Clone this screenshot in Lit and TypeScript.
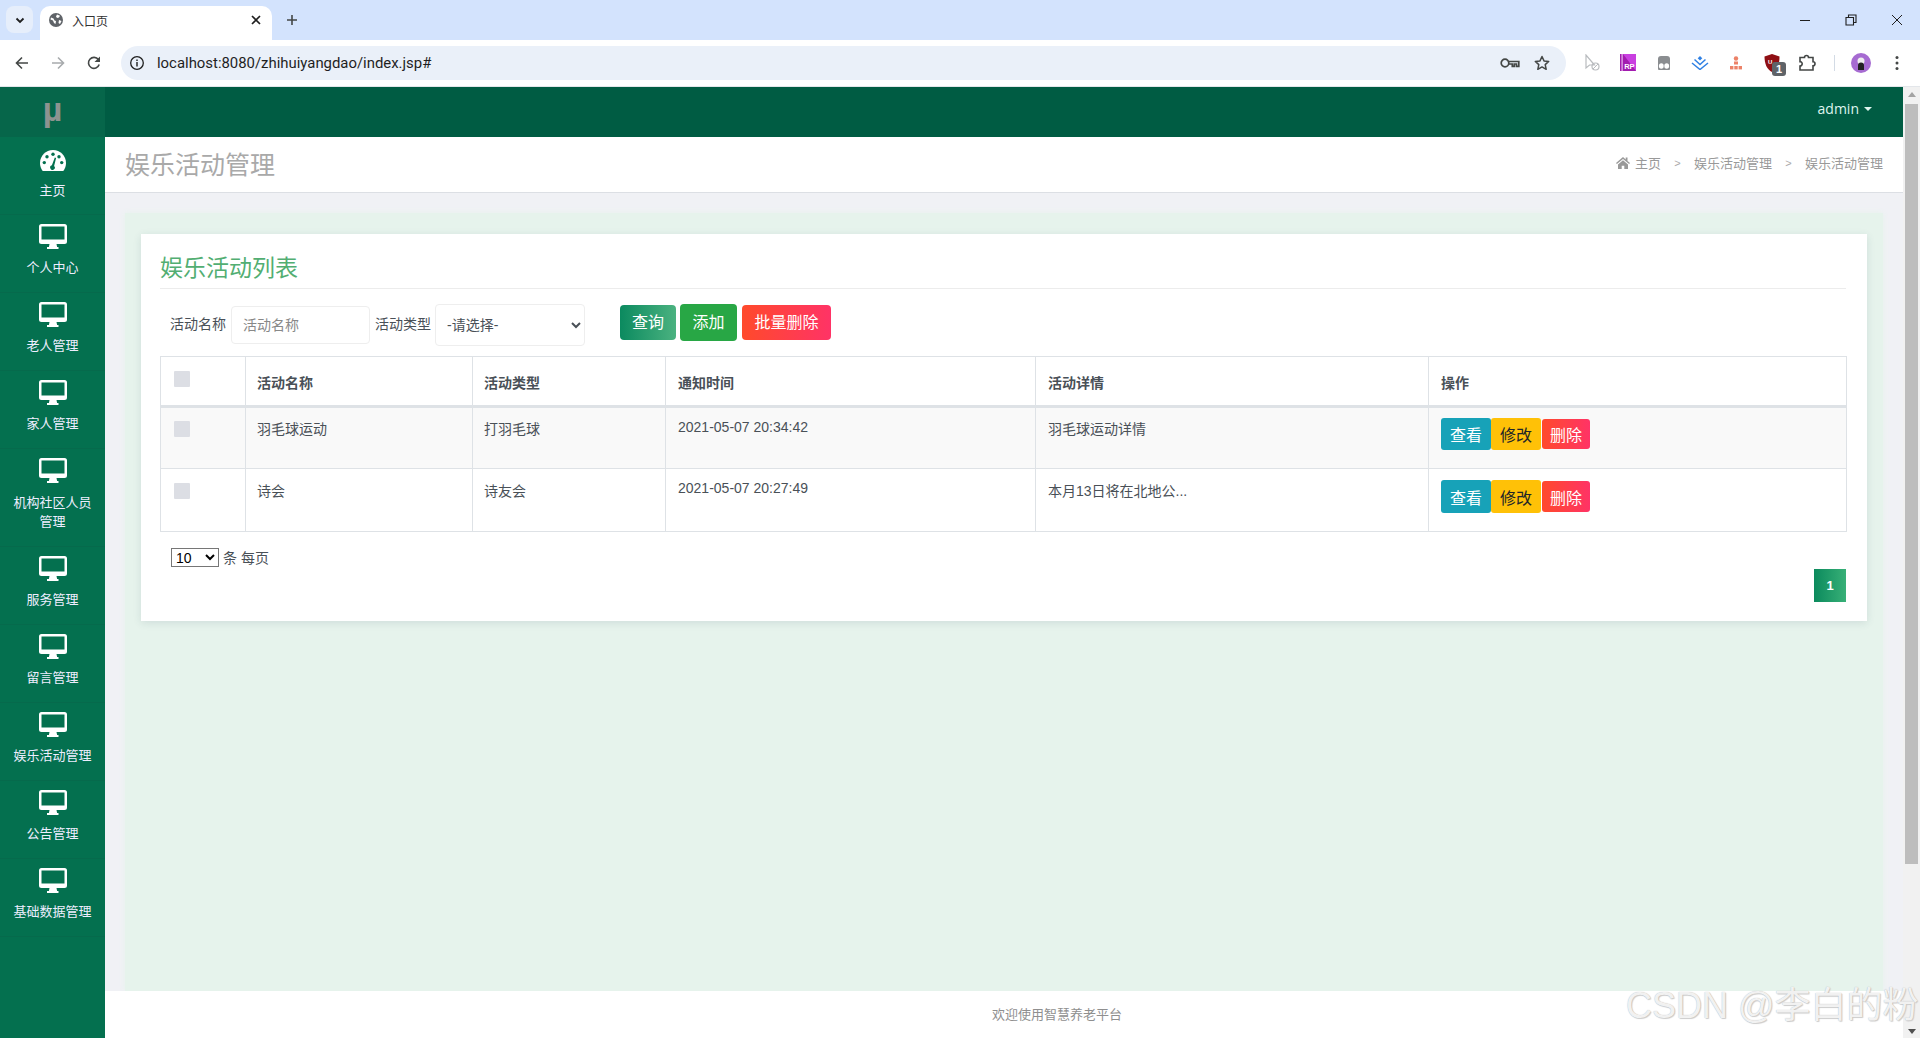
import { LitElement, html, css, svg } from 'lit';
import { customElement } from 'lit/decorators.js';

const desktop = html`<svg class="nav-svg" viewBox="0 0 28 25" width="28" height="25">
  <path fill="#fff" d="M2.5 0h23A2.5 2.5 0 0 1 28 2.5v15a2.5 2.5 0 0 1-2.5 2.5H2.5A2.5 2.5 0 0 1 0 17.5v-15A2.5 2.5 0 0 1 2.5 0zM2.5 2.5v13h23v-13z" fill-rule="evenodd"/>
  <path fill="#fff" d="M10.5 20h7l.6 3h1.4v2h-11.500v-2h1.900z"/>
</svg>`;

const gauge = html`<svg class="nav-svg" viewBox="0 0 26 21" width="26" height="21">
  <path fill="#fff" d="M13 0C5.800 0 0 5.800 0 13c0 2.900 1 5.700 2.700 8h20.600C25 18.700 26 15.900 26 13 26 5.800 20.200 0 13 0z"/>
  <g fill="#04704f">
    <circle cx="13" cy="4.200" r="1.700"/><circle cx="7" cy="6.800" r="1.700"/><circle cx="19" cy="6.800" r="1.700"/>
    <circle cx="4.300" cy="12.600" r="1.700"/><circle cx="21.700" cy="12.600" r="1.700"/>
    <path d="M14.800 7.500l1.300.4-2 8a2.300 2.300 0 1 1-2.200-.6z"/>
  </g>
</svg>`;

const homeIcon = svg`<path fill="#999" d="M7 1L0 7l.9 1L7 3l6.100 5 .9-1-2.500-2.100V1.500h-1.800v1.900zM2 8.500V13h3.700V9.700h2.600V13H12V8.500L7 4.300z"/>`;

const chromeIcon = {
  back: html`<svg viewBox="0 0 16 16" width="16" height="16"><path fill="none" stroke="#444746" stroke-width="1.600" d="M14 8H2.500M8 2.500L2.500 8 8 13.500"/></svg>`,
  forward: html`<svg viewBox="0 0 16 16" width="16" height="16"><path fill="none" stroke="#a8abad" stroke-width="1.600" d="M2 8h11.500M8 2.500L13.500 8 8 13.500"/></svg>`,
  reload: html`<svg viewBox="0 0 16 16" width="16" height="16"><path fill="none" stroke="#444746" stroke-width="1.600" d="M13.200 9.600A5.500 5.500 0 1 1 12.400 4.600"/><path fill="#444746" d="M14 1.500V7H8.500z"/></svg>`,
  info: html`<svg viewBox="0 0 16 16" width="16" height="16"><circle cx="8" cy="8" r="6.300" fill="none" stroke="#1f1f1f" stroke-width="1.300"/><path fill="#1f1f1f" d="M7.300 7h1.400v4.500H7.300zM7.300 4.500h1.400V6H7.300z"/></svg>`,
  key: html`<svg viewBox="0 0 20 12" width="20" height="12"><circle cx="5" cy="6" r="3.800" fill="none" stroke="#444746" stroke-width="1.700"/><path fill="none" stroke="#444746" stroke-width="1.700" d="M8.800 4.500h10v4.800h-2.300V7h-2.200v2.300h-2V7H8.800"/></svg>`,
  star: html`<svg viewBox="0 0 16 16" width="16" height="16"><path fill="none" stroke="#444746" stroke-width="1.500" stroke-linejoin="round" d="M8 1.500l2 4.400 4.700.5-3.500 3.200 1 4.700L8 11.900l-4.200 2.400 1-4.700-3.500-3.200 4.700-.5z"/></svg>`,
};

const extensions = [
  html`<svg viewBox="0 0 16 18" width="16" height="18"><path fill="none" stroke="#b9bcbf" stroke-width="1.200" d="M2 1v13l3.500-3h5z"/><circle cx="11.500" cy="12.500" r="3.500" fill="none" stroke="#b9bcbf" stroke-width="1.200"/><path stroke="#b9bcbf" d="M9 15l5-5"/></svg>`,
  html`<svg viewBox="0 0 16 17" width="16" height="17"><rect width="16" height="17" fill="#a21caf"/><path fill="#c93fe0" d="M3 0h13v17z"/><rect x="1.500" width="1.200" height="17" fill="#e9b7ef"/><text x="4.200" y="14.500" font-size="7.500" font-family="Liberation Sans" font-weight="700" fill="#fff">RP</text></svg>`,
  html`<svg viewBox="0 0 16 16" width="16" height="16"><path fill="#8a8d90" d="M2 4a3 3 0 0 1 3-3h6a3 3 0 0 1 3 3v10a1 1 0 0 1-1 1H3a1 1 0 0 1-1-1z"/><ellipse cx="5.300" cy="11" rx="2.400" ry="2.700" fill="#fff"/><ellipse cx="10.700" cy="11" rx="2.400" ry="2.700" fill="#fff"/></svg>`,
  html`<svg viewBox="0 0 18 14" width="18" height="14"><path fill="#2f80e4" d="M9 0l2.300 2.200L9 4.400 6.700 2.200z"/><path fill="none" stroke="#2f80e4" stroke-width="1.500" d="M3.500 3.500L9 8.500l5.500-5M1 7l8 6.500L17 7"/></svg>`,
  html`<svg viewBox="0 0 14 14" width="14" height="14"><g fill="#ec8268"><circle cx="7" cy="2.500" r="2.200"/><rect x="5" y="5.500" width="4" height="3"/><rect x="1" y="10" width="3.400" height="3.400"/><rect x="5.300" y="10" width="3.400" height="3.400"/><rect x="9.600" y="10" width="3.400" height="3.400"/></g></svg>`,
  html`<svg viewBox="0 0 16 18" width="16" height="18"><path fill="#8f0f14" d="M8 0l7.500 2.500C15.500 10 13 15.500 8 18 3 15.500.5 10 .5 2.500z"/><text x="4" y="10" font-size="6" font-family="Liberation Sans" font-weight="700" fill="#fff">U</text></svg>`,
  html`<svg viewBox="0 0 18 18" width="18" height="18"><path fill="none" stroke="#444746" stroke-width="1.600" d="M1 3.500h4.500a2 2 0 1 1 4 0H14v4.200a2 2 0 1 1 0 4V16H1v-4a2.200 2.200 0 1 0 0-4.400z"/></svg>`,
];

const nav = [
  { label: '主页', icon: gauge, kind: 'first' },
  { label: '个人中心' },
  { label: '老人管理' },
  { label: '家人管理' },
  { label: '机构社区人员管理', kind: 'two-line' },
  { label: '服务管理' },
  { label: '留言管理' },
  { label: '娱乐活动管理' },
  { label: '公告管理' },
  { label: '基础数据管理' },
];

const rows = [
  { name: '羽毛球运动', type: '打羽毛球', time: '2021-05-07 20:34:42', detail: '羽毛球运动详情', tall: false },
  { name: '诗会', type: '诗友会', time: '2021-05-07 20:27:49', detail: '本月13日将在北地公...', tall: true },
];

@customElement('app-root')
export class AppRoot extends LitElement {
  static styles = css`
    :host {
      display: block;
      position: relative;
      height: 1038px;
      overflow: hidden;
      font-family: "Liberation Sans", "Noto Sans CJK SC", sans-serif;
      font-size: 14px;
      color: #495057;
      background: #fff;
    }
    /* browser chrome */
    .tabstrip {
      height: 40px;
      background: #d3e3fd;
      display: flex;
      align-items: flex-end;
    }
    .tab-list {
      width: 27px;
      height: 27px;
      margin: 0 7px 7px 6px;
      border-radius: 8px;
      background: #e6eefb;
      display: flex;
      align-items: center;
      justify-content: center;
    }
    .tab {
      width: 232px;
      height: 34px;
      background: #fff;
      border-radius: 10px 10px 0 0;
      display: flex;
      align-items: center;
      padding: 0 9px 6px;
      box-sizing: border-box;
      font-size: 12px;
      color: #333;
    }
    .tab svg { margin-right: 9px; }
    .tab span { flex: 1; }
    .new-tab {
      width: 40px;
      height: 34px;
      box-sizing: border-box;
      padding-bottom: 6px;
      display: flex;
      align-items: center;
      justify-content: center;
    }
    .window-ctl {
      margin-left: auto;
      display: flex;
      height: 40px;
    }
    .window-ctl div {
      width: 46px;
      display: flex;
      align-items: center;
      justify-content: center;
    }
    .toolbar {
      height: 47px;
      background: #fff;
      display: flex;
      align-items: center;
      border-bottom: 1px solid #e3e6ea;
      box-sizing: border-box;
      padding-bottom: 1px;
    }
    .tool-btn {
      width: 36px;
      display: flex;
      justify-content: center;
    }
    .tool-btn.first { margin-left: 4px; }
    .omnibox {
      width: 1445px;
      height: 34px;
      margin-left: 9px;
      border-radius: 17px;
      background: #eaf0f9;
      display: flex;
      align-items: center;
      box-sizing: border-box;
      padding: 0 16px 0 8px;
      font-family: Roboto, sans-serif;
      font-size: 14.9px;
      color: #1f1f1f;
    }
    .omnibox .url { margin-left: 12px; flex: 1; }
    .omnibox .star { margin-left: 14px; display: flex; }
    .omnibox .key { display: flex; }
    .ext-row {
      display: flex;
      align-items: center;
      margin-left: 8px;
    }
    .ext {
      width: 36px;
      display: flex;
      justify-content: center;
      position: relative;
    }
    .ext .badge {
      position: absolute;
      left: 18px;
      top: 8px;
      width: 14px;
      height: 14px;
      border-radius: 3px;
      background: #5f6368;
      color: #fff;
      font-size: 11px;
      font-weight: 700;
      line-height: 14px;
      text-align: center;
    }
    .divider {
      width: 1px;
      height: 16px;
      margin: 0 8px;
      background: #d3dbe5;
    }
    .avatar {
      width: 20px;
      height: 20px;
      border-radius: 50%;
      background: #a66bd1;
      margin-left: 8px;
      display: flex;
      align-items: center;
      justify-content: center;
    }
    .menu-dots {
      margin-left: 24px;
      display: flex;
    }
    /* page */
    .page {
      display: flex;
      height: 951px;
    }
    .sidebar {
      width: 105px;
      flex: none;
      background: #04704f;
      color: #fff;
    }
    .logo {
      height: 50px;
      box-sizing: border-box;
      padding-bottom: 7px;
      background: #06664a;
      display: flex;
      align-items: center;
      justify-content: center;
      color: #8d9390;
      font-size: 34px;
      font-weight: 700;
      line-height: 1;
    }
    .nav-item {
      border-bottom: 1px solid #066a4c;
      padding: 9px 8px 15px;
      text-align: center;
      font-size: 13px;
      line-height: 18px;
      color: #eef;
    }
    .nav-item.first { padding-top: 13px; padding-bottom: 14px; }
    .nav-item.two-line { line-height: 19px; }
    .nav-icon {
      height: 25px;
      margin-bottom: 10px;
      display: flex;
      justify-content: center;
    }
    .nav-item.first .nav-icon { margin-bottom: 9px; height: 23px; }
    .main {
      flex: 1;
      min-width: 0;
      display: flex;
      flex-direction: column;
      background: #f0f1f5;
    }
    .topbar {
      height: 50px;
      flex: none;
      background: #005c43;
      display: flex;
      align-items: center;
      justify-content: flex-end;
      padding: 0 31px 7px 0;
      box-sizing: border-box;
      color: #dff5ee;
      font-family: "Open Sans", sans-serif;
      font-size: 14px;
    }
    .caret {
      width: 0;
      height: 0;
      margin-left: 5px;
      border: 4px solid transparent;
      border-top-color: #dff5ee;
      border-bottom: 0;
    }
    .page-head {
      height: 56px;
      flex: none;
      background: #fff;
      border-bottom: 1px solid #dcdfe4;
      box-sizing: border-box;
      display: flex;
      align-items: center;
      justify-content: space-between;
      padding: 0 20px 4px;
    }
    .page-head h1 {
      margin: 0;
      font-size: 25px;
      font-weight: 400;
      color: #a9a9a9;
    }
    .crumbs {
      display: flex;
      align-items: center;
      font-size: 13px;
      color: #999;
    }
    .crumbs svg { margin-right: 5px; }
    .crumbs i {
      font-style: normal;
      font-size: 11px;
      width: 33px;
      text-align: center;
      color: #aaa;
    }
    .panel {
      flex: 1;
      margin: 20px 20px 0;
      padding: 21px 16px 0;
      background: #e6f3ec;
      box-shadow: 0 0 6px #e6f3ec;
    }
    .card {
      background: #fff;
      padding: 14px 21px 19px 19px;
      box-shadow: 0 2px 8px rgba(40, 70, 90, .12);
    }
    .card h2 {
      margin: 0;
      height: 40px;
      line-height: 40px;
      border-bottom: 1px solid #ececec;
      font-size: 23px;
      font-weight: 400;
      color: #52ae72;
    }
    .filters {
      display: flex;
      align-items: center;
      height: 42px;
      margin-top: 15px;
    }
    .filters label {
      margin: 0 4px 5px 0;
      color: #495057;
    }
    .filters label:first-child { margin: 0 5px 4px 10px; }
    .filters input {
      width: 139px;
      height: 38px;
      margin: 0 5px 0 0;
      box-sizing: border-box;
      border: 1px solid #eee;
      border-radius: 4px;
      padding: 0 11px;
      font: inherit;
      color: #495057;
      outline: none;
    }
    .filters input::placeholder { color: #888; }
    .filters select {
      width: 150px;
      height: 42px;
      box-sizing: border-box;
      border: 1px solid #eee;
      border-radius: 4px;
      padding: 0 7px;
      background: #fff;
      font: inherit;
      color: #495057;
      margin-right: 35px;
    }
    .btn {
      border: 0;
      border-radius: 4px;
      padding: 0;
      font-family: inherit;
      font-size: 16px;
      color: #fff;
      text-align: center;
    }
    .filters .btn { height: 35px; margin: 0 4px 5px 0; padding-bottom: 3px; }
    .filters .btn.add { height: 37px; }
    .btn.search { width: 56px; background: linear-gradient(90deg, #0b8a5f, #4bb280); }
    .btn.add { width: 57px; background: #28a745; margin-right: 5px !important; }
    .btn.bulk { width: 89px; background: linear-gradient(90deg, #ff4a2b, #ff3366); }
    table {
      width: 1686px;
      margin-top: 10px;
      table-layout: fixed;
      border-collapse: collapse;
      border: 1px solid #dee2e6;
    }
    th, td {
      border: 1px solid #dee2e6;
      padding: 9px 12px 18px;
      text-align: left;
      vertical-align: top;
      line-height: 20px;
      font-weight: 400;
    }
    td.txt { padding-top: 11px; }
    th:nth-child(2), th:nth-child(3), td:nth-child(2), td:nth-child(3) { padding-left: 11px; }
    th {
      height: 50px;
      box-sizing: border-box;
      padding: 0 12px 12px;
      vertical-align: bottom;
      border-bottom: 3px solid #dee2e6;
      font-weight: 700;
      color: #495057;
    }
    th.check { vertical-align: top; padding: 14px 0 0 13px; }
    td.check { padding-left: 13px; padding-top: 13px; }
    td input, th input {
      appearance: none;
      display: block;
      width: 16px;
      height: 16px;
      margin: 0;
      background: #dcdee4;
      border-radius: 1px;
    }
    tr.odd td { background: #f9f9f9; }
    tr.tall td.check { padding-top: 14px; }
    tr.tall td.txt { padding-top: 12px; }
    td.op-cell { padding-top: 10px; }
    tr.tall td.op-cell { padding-top: 11px; }
    .ops {
      display: flex;
      align-items: center;
    }
    .ops .btn { height: 32px; border-radius: 3px; }
    .btn.view { width: 50px; background: #17a2b8; }
    .btn.edit { width: 50px; background: #ffc107; color: #212529; margin-right: 1px; }
    .btn.del { width: 48px; background: linear-gradient(90deg, #ff4a2b, #ff3366); }
    .ops .btn.del { height: 30px; }
    tr.tall .ops .btn { height: 33px; }
    tr.tall .ops .btn.del { height: 31px; }
    .per-page {
      display: flex;
      align-items: center;
      margin: 15px 0 0 11px;
    }
    .per-page select {
      width: 48px;
      height: 19px;
      margin-right: 4px;
      font-family: inherit;
      font-size: 14px;
      background: #fff;
    }
    .pager {
      display: flex;
      justify-content: flex-end;
      margin-top: 2px;
    }
    .pager span {
      width: 32px;
      height: 33px;
      background: linear-gradient(90deg, #0b8a5d, #38b077);
      color: #fff;
      font-size: 13px;
      font-weight: 700;
      line-height: 33px;
      text-align: center;
    }
    .footer {
      height: 47px;
      flex: none;
      background: #fff;
      box-sizing: border-box;
      padding: 9px 0 0 106px;
      margin-top: 0;
      line-height: 30px;
      text-align: center;
      font-size: 13px;
      color: #8f8f8f;
    }
    .scrollbar {
      width: 17px;
      flex: none;
      background: #f1f1f1;
      display: flex;
      flex-direction: column;
      align-items: center;
    }
    .scrollbar .up, .scrollbar .down {
      width: 0;
      height: 0;
      border: 4px solid transparent;
    }
    .scrollbar .up { margin-top: 5px; border-bottom: 5px solid #a3a3a3; border-top: 0; }
    .scrollbar .thumb {
      width: 13px;
      height: 760px;
      margin-top: 7px;
      background: #bdbdbd;
    }
    .scrollbar .down {
      margin-top: auto;
      margin-bottom: 4px;
      border-top: 5px solid #505050;
      border-bottom: 0;
    }
    .watermark {
      position: absolute;
      left: 1626px;
      top: 983px;
      white-space: nowrap;
      font-size: 36px;
      line-height: 46px;
      color: rgba(255, 255, 255, .85);
      text-shadow: 0 0 1px #a8a8a8, 1px 1px 1px #d0d0d0;
      pointer-events: none;
    }
  `;

  render() {
    return html`
      <div class="tabstrip">
        <div class="tab-list">
          <svg viewBox="0 0 12 12" width="12" height="12"><path fill="none" stroke="#1f1f1f" stroke-width="1.800" d="M2.500 4.500L6 8l3.500-3.500"/></svg>
        </div>
        <div class="tab">
          <svg viewBox="0 0 14 14" width="14" height="14">
            <circle cx="7" cy="7" r="7" fill="#5f6368"/>
            <path fill="#fff" d="M2 4.500l2.500 1 1 2 1.500.6-.5 2.900-1.500-1-1-2.500L1.500 6.500zM8 1.500l3 1.200-1 1.800-2 .5-1-1.500zM10 7l2.500 1-1.500 3-1.500-1z"/>
          </svg>
          <span>入口页</span>
          <svg viewBox="0 0 10 10" width="10" height="10" style="margin:0 2px 0 0"><path stroke="#1f1f1f" stroke-width="1.700" d="M1 1l8 8M9 1l-8 8"/></svg>
        </div>
        <div class="new-tab">
          <svg viewBox="0 0 12 12" width="12" height="12"><path stroke="#444746" stroke-width="1.600" d="M6 1v10M1 6h10"/></svg>
        </div>
        <div class="window-ctl">
          <div><svg viewBox="0 0 12 12" width="12" height="12"><path stroke="#1f1f1f" d="M1 6.500h10"/></svg></div>
          <div><svg viewBox="0 0 12 12" width="12" height="12"><path fill="none" stroke="#1f1f1f" stroke-width="1.100" d="M1 3.500h7.500V11H1zM3.500 3.500V1H11v7.500H8.500"/></svg></div>
          <div><svg viewBox="0 0 12 12" width="12" height="12"><path stroke="#1f1f1f" d="M1 1l10 10M11 1L1 11"/></svg></div>
        </div>
      </div>
      <div class="toolbar">
        <div class="tool-btn first">${chromeIcon.back}</div>
        <div class="tool-btn">${chromeIcon.forward}</div>
        <div class="tool-btn">${chromeIcon.reload}</div>
        <div class="omnibox">
          ${chromeIcon.info}
          <span class="url">localhost:8080/zhihuiyangdao/index.jsp#</span>
          <span class="key">${chromeIcon.key}</span>
          <span class="star">${chromeIcon.star}</span>
        </div>
        <div class="ext-row">
          ${extensions.map((icon, i) => html`<div class="ext">${icon}${i === 5 ? html`<span class="badge">1</span>` : ''}</div>`)}
          <div class="divider"></div>
          <div class="avatar">
            <svg viewBox="0 0 14 14" width="14" height="14"><circle cx="7" cy="5" r="3.500" fill="#eee"/><path fill="#222" d="M4 14V9.500a3 3 0 0 1 6 0V14z"/></svg>
          </div>
          <div class="menu-dots">
            <svg viewBox="0 0 4 16" width="4" height="16"><g fill="#444746"><circle cx="2" cy="2.500" r="1.500"/><circle cx="2" cy="8" r="1.500"/><circle cx="2" cy="13.500" r="1.500"/></g></svg>
          </div>
        </div>
      </div>
      <div class="page">
        <aside class="sidebar">
          <div class="logo">µ</div>
          ${nav.map(n => html`
            <div class="nav-item ${n.kind ?? ''}">
              <div class="nav-icon">${n.icon ?? desktop}</div>
              <div>${n.label}</div>
            </div>`)}
        </aside>
        <div class="main">
          <div class="topbar"><span>admin</span><span class="caret"></span></div>
          <div class="page-head">
            <h1>娱乐活动管理</h1>
            <div class="crumbs">
              <svg viewBox="0 0 14 14" width="14" height="14">${homeIcon}</svg>
              <span>主页</span><i>&gt;</i><span>娱乐活动管理</span><i>&gt;</i><span>娱乐活动管理</span>
            </div>
          </div>
          <div class="panel">
            <section class="card">
              <h2>娱乐活动列表</h2>
              <div class="filters">
                <label>活动名称</label>
                <input placeholder="活动名称" />
                <label>活动类型</label>
                <select><option>-请选择-</option></select>
                <button class="btn search">查询</button>
                <button class="btn add">添加</button>
                <button class="btn bulk">批量删除</button>
              </div>
              <table>
                <colgroup>
                  <col style="width:85px" /><col style="width:227px" /><col style="width:193px" />
                  <col style="width:370px" /><col style="width:393px" /><col style="width:418px" />
                </colgroup>
                <thead>
                  <tr>
                    <th class="check"><input type="checkbox" /></th>
                    <th>活动名称</th><th>活动类型</th><th>通知时间</th><th>活动详情</th><th>操作</th>
                  </tr>
                </thead>
                <tbody>
                  ${rows.map((r, i) => html`
                    <tr class="${i % 2 === 0 ? 'odd' : ''} ${r.tall ? 'tall' : ''}">
                      <td class="check"><input type="checkbox" /></td>
                      <td class="txt">${r.name}</td>
                      <td class="txt">${r.type}</td>
                      <td>${r.time}</td>
                      <td class="txt">${r.detail}</td>
                      <td class="op-cell">
                        <div class="ops">
                          <button class="btn view">查看</button>
                          <button class="btn edit">修改</button>
                          <button class="btn del">删除</button>
                        </div>
                      </td>
                    </tr>`)}
                </tbody>
              </table>
              <div class="per-page">
                <select><option>10</option></select>
                <span>条 每页</span>
              </div>
              <div class="pager"><span>1</span></div>
            </section>
          </div>
          <footer class="footer">欢迎使用智慧养老平台</footer>
        </div>
        <div class="scrollbar">
          <div class="up"></div>
          <div class="thumb"></div>
          <div class="down"></div>
        </div>
      </div>
      <div class="watermark">CSDN @李白的粉</div>
    `;
  }
}
